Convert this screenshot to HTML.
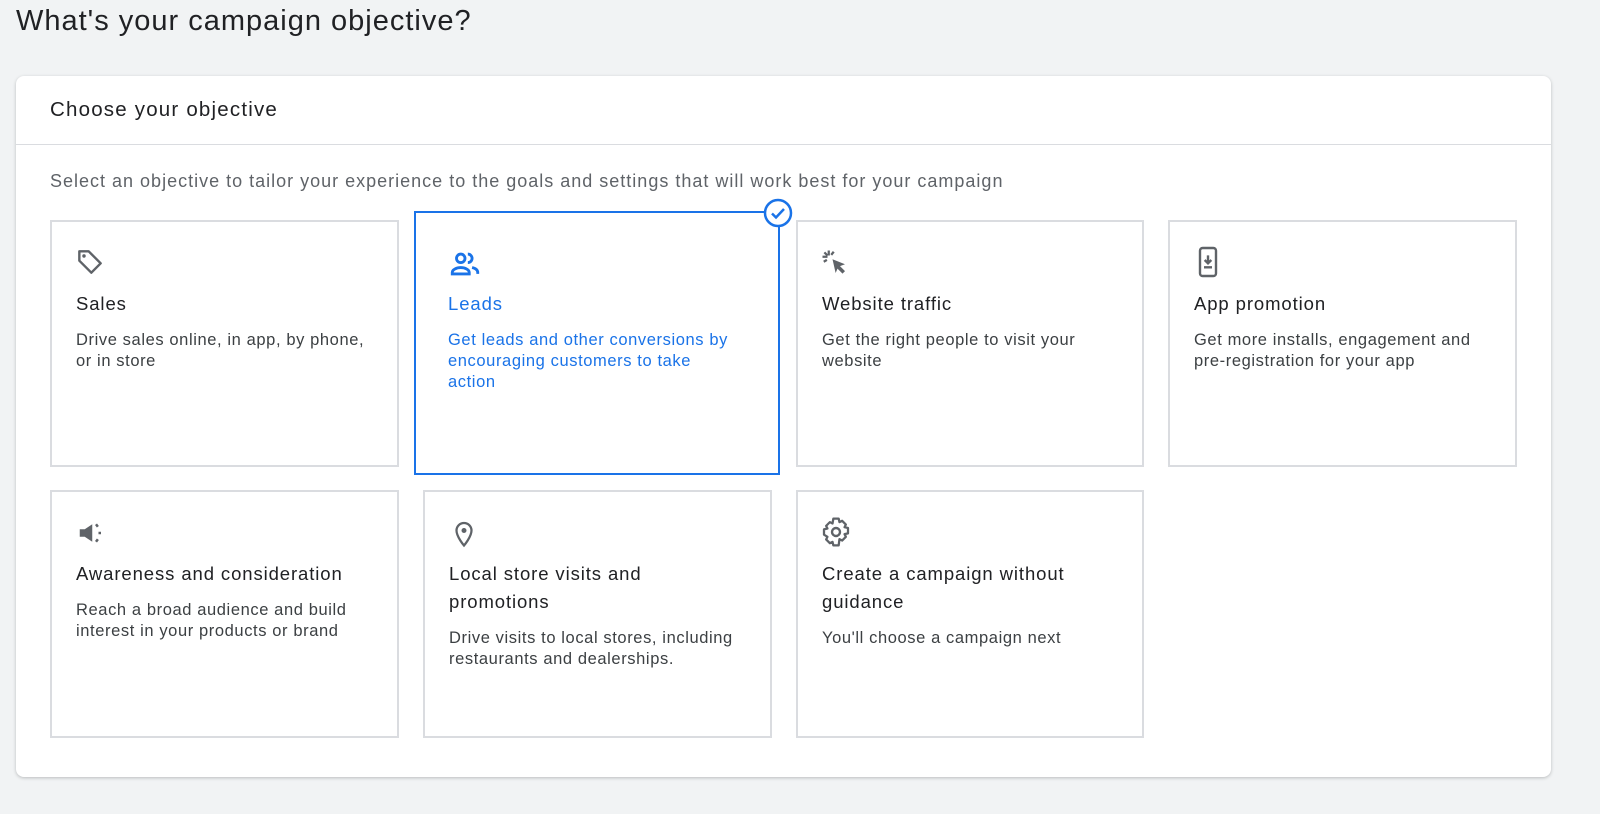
<!DOCTYPE html>
<html><head><style>
*{box-sizing:border-box;margin:0;padding:0}
body{width:1600px;height:814px;background:#f1f3f4;font-family:"Liberation Sans",Arial,sans-serif;position:relative;overflow:hidden;color:#202124}
h1{position:absolute;left:16px;top:5px;font-size:29px;font-weight:400;color:#202124;letter-spacing:1px}
.card{position:absolute;left:16px;top:76px;width:1535px;height:701px;background:#fff;border-radius:8px;box-shadow:0 1px 3px rgba(60,64,67,.3)}
.hd{position:absolute;left:34px;top:22px;font-size:20.5px;color:#202124;letter-spacing:1.2px}
.div{position:absolute;left:0;top:68px;width:100%;height:1px;background:#dadce0}
.sub{position:absolute;left:34px;top:95px;font-size:18px;color:#5f6368;letter-spacing:1px}
.t{position:absolute;background:#fff;border:2px solid #dadce0;}
.t svg{position:absolute;left:24px;top:24px}
.t .n{position:absolute;left:24px;top:70px;font-size:18.5px;color:#202124;line-height:28px;width:300px;letter-spacing:0.9px}
.t .d{position:absolute;left:24px;font-size:16.5px;color:#3c4043;line-height:21px;width:300px;letter-spacing:0.6px}
.sel{border:2px solid #1a73e8}
.sel .n,.sel .d{color:#1a73e8}
</style></head><body>
<h1>What's your campaign objective?</h1>
<div class="card">
<div class="hd">Choose your objective</div>
<div class="div"></div>
<div class="sub">Select an objective to tailor your experience to the goals and settings that will work best for your campaign</div>
</div>
<div class="t" style="left:50px;top:220px;width:349px;height:247px">
<svg width="32" height="32" viewBox="0 0 24 24" style="left:22px;top:24px"><path d="M4 4h7l9 9-7 7-9-9z" fill="none" stroke="#5f6368" stroke-width="1.8" stroke-linejoin="round"/><circle cx="7.5" cy="7.5" r="1.3" fill="#5f6368"/></svg>
<div class="n" style="top:68px">Sales</div><div class="d" style="top:108px">Drive sales online, in app, by phone, or in store</div></div>
<div class="t sel" style="left:414px;top:211px;width:366px;height:264px">
<svg width="34" height="34" viewBox="0 0 24 24" style="left:32px;top:34px"><circle cx="9" cy="8" r="3" fill="none" stroke="#1a73e8" stroke-width="2"/><path d="M3 19v-1c0-2 3-3.5 6-3.5s6 1.5 6 3.5v1z" fill="none" stroke="#1a73e8" stroke-width="2"/><path d="M14 5a3 3 0 010 6M17 14.5c2 .5 4 1.5 4 3.5v1" fill="none" stroke="#1a73e8" stroke-width="2"/></svg>
<div class="n" style="left:32px;top:77px">Leads</div><div class="d" style="left:32px;top:117px;width:285px">Get leads and other conversions by encouraging customers to take action</div></div>
<svg style="position:absolute;left:763px;top:198px" width="30" height="30" viewBox="0 0 30 30"><circle cx="15" cy="15" r="13" fill="#fff" stroke="#1a73e8" stroke-width="2.5"/><path d="M9 15.5l4 4 8-8.5" fill="none" stroke="#1a73e8" stroke-width="2.5"/></svg>
<div class="t" style="left:796px;top:220px;width:348px;height:247px">
<svg width="30" height="30" viewBox="0 0 24 24" style="left:22px;top:26px"><path d="M10 9l10 4-4 1.5 4 4-2 2-4-4L12.5 20z" fill="#5f6368"/><path d="M7 2v4M2 7h4M3.5 3.5l2.5 2.5M11 3l-2 2.5M3 11l2.5-1.5" stroke="#5f6368" stroke-width="1.8"/></svg>
<div class="n" style="top:68px">Website traffic</div><div class="d" style="top:108px">Get the right people to visit your website</div></div>
<div class="t" style="left:1168px;top:220px;width:349px;height:247px">
<svg width="32" height="32" viewBox="0 0 24 24" style="left:22px;top:24px"><rect x="6" y="1.5" width="12" height="21" rx="2" fill="none" stroke="#5f6368" stroke-width="1.8"/><path d="M12 7v6M9.5 10.5L12 13l2.5-2.5M9 16h6" stroke="#5f6368" stroke-width="1.8" fill="none"/></svg>
<div class="n" style="top:68px">App promotion</div><div class="d" style="top:108px">Get more installs, engagement and pre-registration for your app</div></div>
<div class="t" style="left:50px;top:490px;width:349px;height:248px">
<svg width="30" height="30" viewBox="0 0 24 24" style="left:24px;top:26px"><path d="M3 9h4l6-4v14l-6-4H3z" fill="#5f6368"/><path d="M16 5l1.5 2M16 19l1.5-2M18 12h2" stroke="#5f6368" stroke-width="2"/></svg>
<div class="n" style="top:68px">Awareness and consideration</div><div class="d" style="top:108px">Reach a broad audience and build interest in your products or brand</div></div>
<div class="t" style="left:423px;top:490px;width:349px;height:248px">
<svg width="30" height="30" viewBox="0 0 24 24" style="left:24px;top:26px"><path d="M12 22s-6-7-6-12a6 6 0 0112 0c0 5-6 12-6 12z" fill="none" stroke="#5f6368" stroke-width="1.8"/><circle cx="12" cy="10" r="2" fill="#5f6368"/></svg>
<div class="n" style="top:68px;width:260px">Local store visits and promotions</div><div class="d" style="top:136px">Drive visits to local stores, including restaurants and dealerships.</div></div>
<div class="t" style="left:796px;top:490px;width:348px;height:248px">
<svg width="32" height="32" viewBox="0 0 24 24" style="left:22px;top:24px"><circle cx="12" cy="12" r="3" fill="none" stroke="#5f6368" stroke-width="1.8"/><path d="M10 2h4l.6 2.6 2-1 2.8 2.8-1 2 2.6.6v4l-2.6.6 1 2-2.8 2.8-2-1L14 22h-4l-.6-2.6-2 1-2.8-2.8 1-2L3 14v-4l2.6-.6-1-2 2.8-2.8 2 1z" fill="none" stroke="#5f6368" stroke-width="1.7" stroke-linejoin="round"/></svg>
<div class="n" style="top:68px">Create a campaign without guidance</div><div class="d" style="top:136px">You'll choose a campaign next</div></div>
</body></html>
